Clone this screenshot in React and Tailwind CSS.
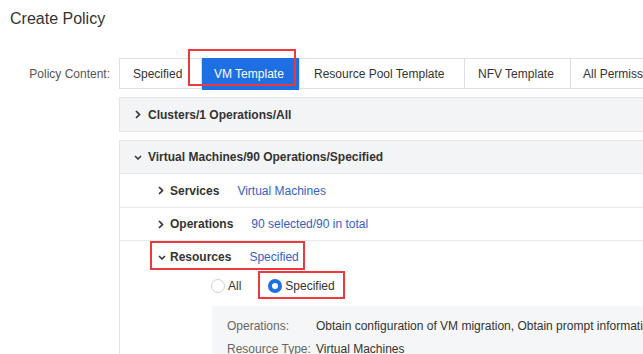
import React from 'react';

const ChevronRight = () => (
  <svg width="6" height="9" viewBox="0 0 6 9" className="shrink-0">
    <polyline points="1,1 4.5,4.5 1,8" fill="none" stroke="#333" strokeWidth="1.7" />
  </svg>
);

const ChevronDown = () => (
  <svg width="8" height="5" viewBox="0 0 8 5" className="shrink-0">
    <polyline points="1,1 4,4 7,1" fill="none" stroke="#333" strokeWidth="1.5" />
  </svg>
);

const tabs = [
  { name: 'Specified', w: 'w-[81px] pl-[13px]' },
  { name: 'VM Template', w: 'w-[98px] pl-[12px]', active: true },
  { name: 'Resource Pool Template', w: 'w-[165px] pl-[14px]' },
  { name: 'NFV Template', w: 'w-[106px] pl-[13px]' },
  { name: 'All Permissions', w: 'w-[120px] pl-[12px]' },
];

const SubRow = ({ label, value, open, border = true, height = 'h-[34px]' }) => (
  <div className={`flex items-center ${height} pl-[38px] ${border ? 'border-b border-[#e8e9eb]' : ''}`}>
    <div className="w-[12px] shrink-0 flex items-center">{open ? <ChevronDown /> : <ChevronRight />}</div>
    <span className="font-bold text-[#333]">{label}</span>
    <span className="ml-[18px] text-[#3560c4]">{value}</span>
  </div>
);

export default function App() {
  return (
    <div className="relative w-[643px] h-[354px] overflow-hidden bg-white text-[12px] whitespace-nowrap" style={{ fontFamily: '"Liberation Sans", Arial, sans-serif' }}>
      <div className="pl-[10px] pt-[9px] text-[16px] leading-[20px] text-[#333]">Create Policy</div>

      <div className="flex items-center mt-[29px]">
        <div className="w-[110px] shrink-0 text-right text-[#555]">Policy Content:</div>
        <div className="ml-[9px] shrink-0 flex h-[31px] border border-[#dedfe1]">
          {tabs.map((t, i) => (
            <div
              key={t.name}
              className={`${t.w} shrink-0 flex items-center ${i > 0 ? 'border-l border-[#dedfe1]' : ''} ${t.active ? 'bg-[#1e6fe3] text-white -mt-px h-[32px]' : 'text-[#333]'}`}
            >
              {t.name}
            </div>
          ))}
        </div>
      </div>

      <div className="ml-[119px] w-[540px]">
        <div className="mt-[8px] h-[35px] flex items-center gap-[7px] pl-[15px] bg-[#f3f4f6] border border-[#e3e4e6]">
          <ChevronRight />
          <span className="font-bold text-[#333]">Clusters/1 Operations/All</span>
        </div>

        <div className="mt-[8px] border border-[#e3e4e6]">
          <div className="h-[33px] flex items-center gap-[6px] pl-[14px] bg-[#f3f4f6] border-b border-[#e3e4e6]">
            <ChevronDown />
            <span className="font-bold text-[#333]">Virtual Machines/90 Operations/Specified</span>
          </div>
          <SubRow label="Services" value="Virtual Machines" />
          <SubRow label="Operations" value="90 selected/90 in total" height="h-[33px]" />
          <SubRow label="Resources" value="Specified" open border={false} height="h-[32px]" />

          <div className="flex items-center h-[26px] pl-[91px] text-[#333]">
            <label className="flex items-center gap-[3px]">
              <span className="w-[14px] h-[14px] shrink-0 rounded-full border border-[#cfd1d4] bg-white" />
              All
            </label>
            <label className="flex items-center gap-[3px] ml-[27px]">
              <span className="w-[14px] h-[14px] shrink-0 rounded-full bg-[#1e6fe3] flex items-center justify-center">
                <span className="w-[6px] h-[6px] rounded-full bg-white" />
              </span>
              Specified
            </label>
          </div>

          <div className="mt-[7px] ml-[92px] bg-[#f5f6f8] pt-[11px] pl-[15px] pb-[10px] leading-[18px] flex flex-col gap-[5px]">
            <div className="flex">
              <span className="w-[89px] shrink-0 text-[#666]">Operations:</span>
              <span className="text-[#333]">Obtain configuration of VM migration, Obtain prompt information of VM migration</span>
            </div>
            <div className="flex">
              <span className="w-[89px] shrink-0 text-[#666]">Resource Type:</span>
              <span className="text-[#333]">Virtual Machines</span>
            </div>
          </div>
        </div>
      </div>

      <div className="absolute left-[188px] top-[49px] w-[108px] h-[37px] border-2 border-[#ea3a3d]" />
      <div className="absolute left-[150px] top-[241px] w-[155px] h-[29px] border-2 border-[#ea3a3d]" />
      <div className="absolute left-[258px] top-[271px] w-[87px] h-[28px] border-2 border-[#ea3a3d]" />
    </div>
  );
}
